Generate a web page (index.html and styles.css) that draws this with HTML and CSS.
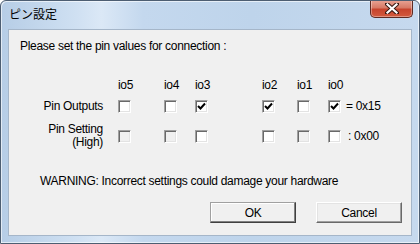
FILE: index.html
```html
<!DOCTYPE html>
<html>
<head>
<meta charset="utf-8">
<link rel="stylesheet" href="styles.css">
</head>
<body>
<div class="window">
  <div class="titlebar">
    <span class="title">ピン設定</span>
    <div class="close"><svg width="14" height="11" viewBox="0 0 14 11"><path d="M2 1 L12 10 M12 1 L2 10" stroke="#3a1a14" stroke-width="4.2" stroke-linecap="square"/><path d="M2.5 1.5 L11.5 9.5 M11.5 1.5 L2.5 9.5" stroke="#fff" stroke-width="2.2" stroke-linecap="square"/></svg></div>
  </div>
  <div class="client">
    <div class="intro">Please set the pin values for connection :</div>
    <div class="pins">
      <div></div>
      <div class="hdr">io5</div>
      <div class="hdr">io4</div>
      <div class="hdr">io3</div>
      <div class="hdr">io2</div>
      <div class="hdr">io1</div>
      <div class="hdr">io0</div>

      <div class="label">Pin Outputs</div>
      <div><span class="cb"></span></div>
      <div><span class="cb"></span></div>
      <div><span class="cb on"><svg width="9" height="9" viewBox="0 0 9 9"><path d="M1 4 L3.5 6.5 L8 1.5" fill="none" stroke="#000" stroke-width="2"/></svg></span></div>
      <div><span class="cb on"><svg width="9" height="9" viewBox="0 0 9 9"><path d="M1 4 L3.5 6.5 L8 1.5" fill="none" stroke="#000" stroke-width="2"/></svg></span></div>
      <div><span class="cb"></span></div>
      <div class="last"><span class="cb on"><svg width="9" height="9" viewBox="0 0 9 9"><path d="M1 4 L3.5 6.5 L8 1.5" fill="none" stroke="#000" stroke-width="2"/></svg></span><span class="val">= 0x15</span></div>

      <div class="label two">Pin Setting<br>(High)</div>
      <div><span class="cb dis"></span></div>
      <div><span class="cb dis"></span></div>
      <div><span class="cb"></span></div>
      <div><span class="cb"></span></div>
      <div><span class="cb dis"></span></div>
      <div class="last"><span class="cb"></span><span class="val v2">: 0x00</span></div>
    </div>
    <div class="warning">WARNING: Incorrect settings could damage your hardware</div>
    <div class="buttons">
      <button class="btn default">OK</button>
      <button class="btn">Cancel</button>
    </div>
  </div>
</div>
</body>
</html>
```
FILE: styles.css
```css
html, body {
  margin: 0;
  padding: 0;
  background: #fff;
}
body {
  font-family: "Liberation Sans", "Noto Sans CJK JP", sans-serif;
  font-size: 12px;
  letter-spacing: -0.3px;
  color: #000;
}
.window {
  width: 420px;
  height: 244px;
  box-sizing: border-box;
  border: 1px solid #4d5e72;
  border-radius: 6px 6px 0 0;
  background: linear-gradient(to right, #b6cde6 0%, #cfe0f2 18%, #dbe8f6 24%, #c4d8ee 34%, #bed4eb 60%, #c6d9ee 100%);
  box-shadow: inset 1px 1px 0 rgba(255,255,255,0.6), inset -1px -1px 0 rgba(255,255,255,0.6);
  display: flex;
  flex-direction: column;
  overflow: hidden;
}
.titlebar {
  height: 28px;
  display: flex;
  align-items: flex-start;
  justify-content: space-between;
  flex: none;
}
.title {
  font-family: "Noto Sans CJK JP", sans-serif;
  font-size: 12px;
  letter-spacing: 0;
  line-height: 14px;
  margin: 6px 0 0 8px;
  color: #000;
}
.close {
  width: 43px;
  height: 18px;
  margin-right: 6px;
  margin-top: -1px;
  box-sizing: border-box;
  border: 1px solid #5e2a22;
  border-top: none;
  border-radius: 0 0 5px 5px;
  background: linear-gradient(to bottom, #e9a596 0%, #d77a66 45%, #c7442d 55%, #d25a3e 100%);
  box-shadow: inset 0 0 0 1px rgba(255,255,255,0.35);
  display: flex;
  align-items: center;
  justify-content: center;
}
.client {
  margin: 0 7px 0 7px;
  height: 207px;
  box-sizing: border-box;
  background: #f0f0f0;
  border: 1px solid #a5b6c9;
  padding: 9px 9px 0 11px;
}
.intro {
  line-height: 14px;
  height: 14px;
}
.pins {
  display: grid;
  grid-template-columns: 98px 46px 31px 67px 35px 31px auto;
  grid-template-rows: 12px 30px 30px;
  align-items: center;
  margin-top: 26px;
}
.hdr {
  align-self: start;
  line-height: 12px;
}
.label {
  text-align: right;
  padding-right: 15px;
  line-height: 13px;
}
.label.two {
  line-height: 13px;
}
.last {
  display: flex;
  align-items: center;
}
.cb {
  display: flex;
  align-items: center;
  justify-content: center;
  width: 13px;
  height: 13px;
  box-sizing: border-box;
  border: 1px solid;
  border-color: #a0a0a0 #ffffff #ffffff #a0a0a0;
  box-shadow: inset 1px 1px 0 #696969, inset -1px -1px 0 #e3e3e3;
  background: #fff;
}
.cb.dis {
  background: #f0f0f0;
}
.cb svg {
  display: block;
}
.val {
  margin-left: 5px;
  line-height: 13px;
}
.val.v2 {
  margin-left: 7px;
}
.warning {
  margin-top: 23px;
  padding-left: 20px;
  line-height: 14px;
}
.buttons {
  display: flex;
  justify-content: flex-end;
  gap: 20px;
  margin-top: 14px;
}
.btn {
  width: 86px;
  height: 21px;
  padding: 0;
  font-family: "Liberation Sans", sans-serif;
  font-size: 12px;
  letter-spacing: -0.3px;
  color: #000;
  background: #f0f0f0;
  border: 1px solid;
  border-color: #ffffff #696969 #696969 #ffffff;
  box-shadow: inset -1px -1px 0 #a0a0a0, inset 1px 1px 0 #e3e3e3;
}
.btn.default {
  border-color: #a0a0a0 #404040 #404040 #a0a0a0;
  box-shadow: inset -1px -1px 0 #808080, inset 1px 1px 0 #ffffff;
}
```
